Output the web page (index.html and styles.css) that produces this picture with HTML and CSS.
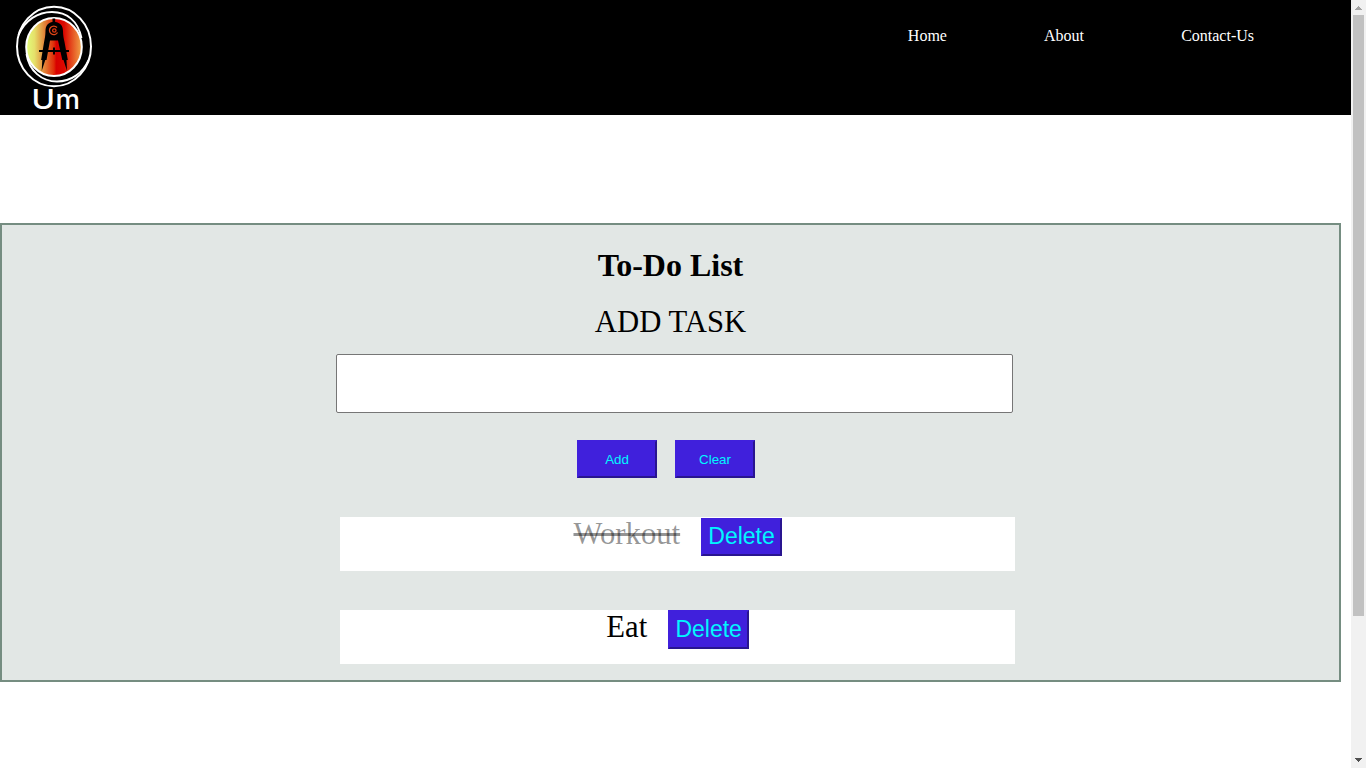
FILE: index.html
```html
<!DOCTYPE html>
<html lang="en">
<head>
<meta charset="utf-8">
<title>To-Do List</title>
<link rel="stylesheet" href="styles.css">
</head>
<body>
<div class="page">
  <header class="navbar">
    <svg class="logo" width="100" height="115" viewBox="0 0 100 115" role="img" aria-label="Um">
      <defs>
        <linearGradient id="sun">
          <stop offset="0" stop-color="#e2ff7c"/>
          <stop offset=".15" stop-color="#e5e06a"/>
          <stop offset=".5" stop-color="#e02a08"/>
          <stop offset=".54" stop-color="#d80000"/>
          <stop offset=".68" stop-color="#dc0800"/>
          <stop offset="1" stop-color="#f0a548"/>
        </linearGradient>
      </defs>
      <g fill="none" stroke="#fff">
        <ellipse cx="54" cy="46.500" rx="37" ry="39.800" stroke-width="2"/>
        <path d="M18.500 35C25 20 38 12 52 12C67 12 78 21 81.500 38" stroke-width="1.900"/>
        <path d="M26.500 54C29 71 42 81.500 57 81.500C71 81.500 83 73 88.500 60" stroke-width="1.900"/>
      </g>
      <ellipse cx="54" cy="47" rx="27.800" ry="29" fill="url(#sun)" stroke="#fff" stroke-width="2"/>
      <path d="M52.500 18.500h2.700v3.500c5 .5 7.800 4 7.800 9 0 4 .8 8 1.500 11l3.300 18h-1.300l.5 11-3.500-11h-1.200l-4.300-19.500h-8l-3.500 19.500h-1.200l-3.600 11 .6-11h-1.200l3-18c.6-3 1.400-7 1.400-11 0-5 2.500-8.500 7-9z" fill="#000"/>
      <path d="M39 51h30M54 47.500v7" stroke="#000" stroke-width="1.900"/>
      <path d="M57 27.500a4.300 4.300 0 1 0 .5 5" fill="none" stroke="#e04818" stroke-width="1.300"/>
      <circle cx="54.300" cy="30.500" r="1.700" fill="none" stroke="#e03812" stroke-width="1.300"/>
      <text class="logo-text" y="109"><tspan x="31.500" textLength="23.500" lengthAdjust="spacingAndGlyphs">U</tspan><tspan x="55.500" textLength="24.500" lengthAdjust="spacingAndGlyphs">m</tspan></text>
    </svg>
    <nav class="links">
      <a class="link">Home</a>
      <a class="link">About</a>
      <a class="link">Contact-Us</a>
    </nav>
  </header>
  <main class="panel">
    <h1 class="title">To-Do List</h1>
    <label class="label" for="task">ADD TASK</label>
    <input class="field" id="task" type="text">
    <div class="actions">
      <button class="btn">Add</button>
      <button class="btn">Clear</button>
    </div>
    <ul class="tasks">
      <li class="task"><span class="name done">Workout</span><button class="btn delete">Delete</button></li>
      <li class="task"><span class="name">Eat</span><button class="btn delete delete-tall">Delete</button></li>
    </ul>
  </main>
</div>
<div class="scrollbar">
  <svg class="arrow" width="15" height="15" shape-rendering="crispEdges"><path d="M7 6h1v1h1v1h1v1h1v1h-7v-1h1v-1h1v-1h1z" fill="#a3a3a3"/></svg>
  <div class="track"><div class="thumb"></div></div>
  <svg class="arrow" width="15" height="15" shape-rendering="crispEdges"><path d="M4 5h7v1h-1v1h-1v1h-1v1h-1v-1h-1v-1h-1v-1h-1z" fill="#505050"/></svg>
</div>
</body>
</html>
```
FILE: styles.css
```css
* { box-sizing: border-box; }
body {
  margin: 0;
  height: 768px;
  overflow: hidden;
  display: flex;
  background: #fff;
  font-family: "Liberation Serif", "Times New Roman", serif;
}
.page { width: 1351px; }
.navbar {
  height: 115px;
  display: flex;
  justify-content: space-between;
  background: #000;
}
.logo { display: block; }
.logo-text { font-family: Inter, sans-serif; font-weight: 500; font-size: 27px; fill: #fff; }
.links {
  display: flex;
  gap: 97.1px;
  padding: 27px 97px 0 0;
}
.link { color: #fff; font-size: 16px; line-height: 18px; }
.panel {
  width: 1341px;
  height: 459px;
  margin-top: 108px;
  border: 2px solid #758d81;
  background: #e2e7e5;
  display: flex;
  flex-direction: column;
  align-items: center;
}
.panel > * { flex-shrink: 0; }
.title { margin: 22px 0 0; font-size: 32px; line-height: 36px; }
.label { margin-top: 22px; font-size: 30.7px; line-height: 35px; }
.field {
  width: 677px;
  height: 59px;
  margin: 14px 0 0 8px;
  border: 1px solid #767676;
  border-radius: 2px;
  background: #fff;
}
.actions { display: flex; gap: 18px; margin: 27px 9px 0 0; }
.btn {
  width: 80px;
  height: 38px;
  padding: 0;
  border: 2px solid;
  border-color: #4020dc #291590 #291590 #4020dc;
  background: #4020dc;
  color: #00f7ff;
  font: 13.333px "Liberation Sans", Arial, sans-serif;
}
.tasks { list-style: none; margin: 39px 0 0 14px; padding: 0; width: 675px; }
.task {
  height: 54px;
  background: #fff;
  display: flex;
  justify-content: center;
  gap: 20.4px;
}
.task + .task { margin-top: 39px; }
.name { font-size: 30.7px; line-height: 34px; }
.done { color: rgba(0, 0, 0, .42); text-decoration: line-through; }
.delete { width: 81px; margin-top: 1px; padding: 0 0 2px 1px; font-size: 23px; }
.delete-tall { height: 39px; margin-top: 0; padding-bottom: 0; }
.scrollbar { width: 15px; height: 768px; background: #f1f1f1; display: flex; flex-direction: column; }
.arrow { display: block; }
.track { flex: 1; }
.thumb { width: 11px; height: 601px; margin-left: 2px; background: #c1c1c1; }
```
